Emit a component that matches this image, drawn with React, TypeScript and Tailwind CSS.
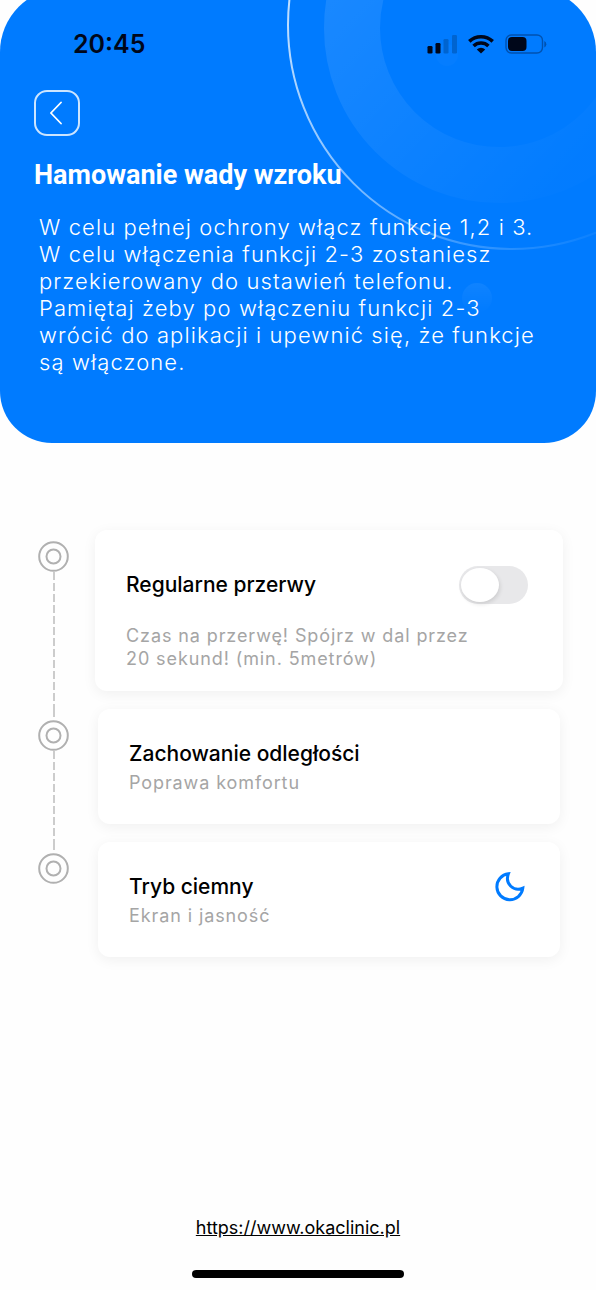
import { ReactNode, useState } from 'react';

interface StepProps {
  first?: boolean
  last?: boolean
  children: ReactNode
}

const DASHES = 'w-[2px] bg-[repeating-linear-gradient(to_bottom,#cccccc_0px,#cccccc_8px,transparent_8px,transparent_11px)]';

const StatusBar = () => (
  <div className="flex items-center justify-between pl-[73px] pr-[49px]">
    <span className="text-[25px] leading-[30px] font-semibold text-[#00071a]">20:45</span>
    <svg width="120" height="20" viewBox="0 0 120 20" aria-hidden="true">
      <rect x="0.5" y="12" width="5" height="7.5" rx="1.3" fill="#00071a" />
      <rect x="8.5" y="9" width="5" height="10.5" rx="1.3" fill="#00071a" />
      <rect x="16.5" y="5" width="5" height="14.5" rx="1.3" fill="#0064d0" />
      <rect x="25" y="1" width="5" height="18.5" rx="1.3" fill="#0064d0" />
      <g fill="none" stroke="#00071a" strokeWidth="3.6">
        <path d="M42.3 7.4 A17 17 0 0 1 65.7 7.4" />
        <path d="M46.6 12 A10.8 10.8 0 0 1 61.4 12" />
      </g>
      <path d="M54 19.5 L49.8 15.4 A6.2 6.2 0 0 1 58.2 15.4 Z" fill="#00071a" />
      <rect x="79" y="1" width="36.5" height="18" rx="5.5" fill="none" stroke="#0052b0" strokeWidth="1.4" />
      <rect x="81" y="3" width="18.5" height="14" rx="4" fill="#00071a" />
      <path d="M117.3 7 q2 1 2 3.2 t-2 3.2 Z" fill="#0052b0" />
    </svg>
  </div>
)

const HeaderRings = () => (
  <svg className="absolute top-0 right-0" width="320" height="320" viewBox="276 0 320 320" aria-hidden="true">
    <defs>
      <linearGradient id="ring" gradientUnits="userSpaceOnUse" x1="287" y1="20" x2="590" y2="240">
        <stop offset="0" stopColor="#fff" stopOpacity="0.75" />
        <stop offset="0.4" stopColor="#fff" stopOpacity="0.5" />
        <stop offset="0.7" stopColor="#fff" stopOpacity="0.25" />
        <stop offset="1" stopColor="#fff" stopOpacity="0.05" />
      </linearGradient>
      <linearGradient id="band" gradientUnits="userSpaceOnUse" x1="324" y1="0" x2="540" y2="200">
        <stop offset="0" stopColor="#fff" stopOpacity="0.1" />
        <stop offset="1" stopColor="#fff" stopOpacity="0.01" />
      </linearGradient>
      <linearGradient id="dot" x1="0" y1="0" x2="0" y2="1">
        <stop offset="0" stopColor="#fff" stopOpacity="0.06" />
        <stop offset="1" stopColor="#fff" stopOpacity="0" />
      </linearGradient>
    </defs>
    <circle cx="512" cy="25" r="224" fill="none" stroke="url(#ring)" strokeWidth="2" />
    <circle cx="499" cy="28" r="147" fill="none" stroke="url(#band)" strokeWidth="56" />
    <circle cx="477" cy="298" r="15" fill="url(#dot)" />
    <circle cx="447" cy="55" r="11" fill="#fff" fillOpacity="0.02" />
  </svg>
)

const Step: React.FC<StepProps> = ({ first, last, children }) => (
  <li className="flex gap-[26px]">
    <div className="flex w-[31px] shrink-0 flex-col items-center">
      <div className={`h-[11px] ${first ? '' : DASHES}`} />
      <svg className="shrink-0" width="31" height="31" viewBox="0 0 31 31" fill="none" stroke="#b0b0b0" strokeWidth="2" aria-hidden="true">
        <circle cx="15.5" cy="15.5" r="14.3" />
        <circle cx="15.5" cy="15.5" r="7" />
      </svg>
      {!last && <div className={`flex-1 ${DASHES}`} />}
    </div>
    <div className={`min-w-0 flex-1 ${last ? '' : 'pb-[18px]'}`}>{children}</div>
  </li>
)

const CARD = 'rounded-xl bg-white px-[31px] shadow-[0_3px_14px_rgba(0,0,0,0.06)]';
const TITLE = 'text-[21px] leading-[30px] font-medium text-black';
const NOTE = 'text-[18px] leading-[23px] tracking-wider text-[#a5a5a5]';

export default function App() {
  const [breaks, setBreaks] = useState(false)

  return (
    <div className="flex min-h-screen flex-col overflow-hidden bg-[#fefefe] font-['Inter','Liberation_Sans',sans-serif]">
      <header className="relative -mt-3 overflow-hidden rounded-t-[64px] rounded-b-[52px] bg-[#007bff] pt-3">
        <div className="absolute inset-x-0 top-3">
          <HeaderRings />
        </div>
        <div className="relative pt-[29px] pb-[67px]">
          <StatusBar />
          <div className="px-[34px]">
            <button type="button" aria-label="Wstecz" className="mt-[31px] flex h-[46px] w-[46px] items-center justify-center rounded-[13px] border-2 border-white/80">
              <svg width="14" height="24" viewBox="0 0 14 24" fill="none" stroke="#fff" strokeWidth="1.8" strokeLinecap="round" strokeLinejoin="round" aria-hidden="true">
                <path d="M11 1.5 L0.9 12 L11 22.5" />
              </svg>
            </button>
            <h1 className="mt-[23px] font-['Roboto',sans-serif] text-[27px] leading-8 font-bold text-white">Hamowanie wady wzroku</h1>
            <p className="mt-[23px] pl-[5px] text-[22px] leading-[27px] font-light tracking-wider text-white">
              W celu pełnej ochrony włącz funkcje 1,2 i 3.<br />
              W celu włączenia funkcji 2-3 zostaniesz<br />
              przekierowany do ustawień telefonu.<br />
              Pamiętaj żeby po włączeniu funkcji 2-3<br />
              wrócić do aplikacji i upewnić się, że funkcje<br />
              są włączone.
            </p>
          </div>
        </div>
      </header>

      <main className="pt-[87px] pr-[33px] pl-[38px]">
        <ol>
          <Step first>
            <div className={`${CARD} pt-9 pb-[21px]`}>
              <div className="flex h-[38px] items-center justify-between">
                <label htmlFor="breaks" className={TITLE}>Regularne przerwy</label>
                <input
                  id="breaks"
                  type="checkbox"
                  role="switch"
                  checked={breaks}
                  onChange={e => setBreaks(e.target.checked)}
                  className="mr-1 h-[38px] w-[69px] cursor-pointer appearance-none rounded-full bg-[#e8e8ea] p-[2px] before:block before:h-[34px] before:w-[38px] before:rounded-[50%] before:bg-white before:shadow-[1px_2px_4px_rgba(0,0,0,0.12)] checked:bg-[#007bff] checked:before:ml-[27px]"
                />
              </div>
              <p className={`mt-5 ${NOTE}`}>
                Czas na przerwę! Spójrz w dal przez<br />
                20 sekund! (min. 5metrów)
              </p>
            </div>
          </Step>
          <Step>
            <div className={`${CARD} mx-[3px] pt-[30px] pb-[30px]`}>
              <h2 className={TITLE}>Zachowanie odległości</h2>
              <p className={`mt-[2px] ${NOTE}`}>Poprawa komfortu</p>
            </div>
          </Step>
          <Step last>
            <div className={`${CARD} mx-[3px] flex items-start justify-between pt-[30px] pb-[30px]`}>
              <div>
                <h2 className={TITLE}>Tryb ciemny</h2>
                <p className={`mt-[2px] ${NOTE}`}>Ekran i jasność</p>
              </div>
              <button type="button" aria-label="Tryb ciemny" className="mr-1">
                <svg width="30" height="30" viewBox="0 2 30 30" fill="none" stroke="#007bff" strokeWidth="3" aria-hidden="true">
                  <path d="M13.4 3.8 A13 13 0 1 0 27.8 18.2 C19 22 9.5 14 13.4 3.8 Z" />
                </svg>
              </button>
            </div>
          </Step>
        </ol>
      </main>

      <footer className="mt-auto flex flex-col items-center gap-[30px] pb-3">
        <a href="https://www.okaclinic.pl" className="text-[18px] leading-6 text-black underline">https://www.okaclinic.pl</a>
        <div className="h-2 w-[212px] rounded-full bg-black" />
      </footer>
    </div>
  )
}
